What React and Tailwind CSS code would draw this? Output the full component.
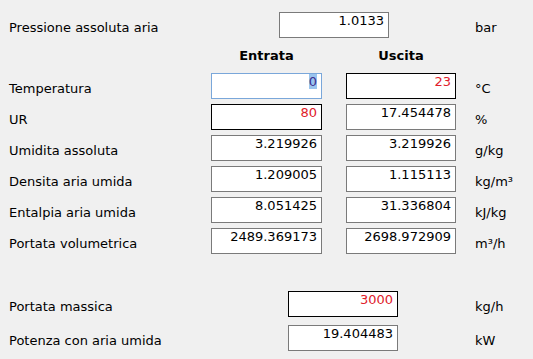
export default function App() {

    const rows = [
        { label: "Temperatura", a: "0", b: "23", unit: "°C", aSel: true, bEdit: true },
        { label: "UR", a: "80", b: "17.454478", unit: "%", aEdit: true },
        { label: "Umidita assoluta", a: "3.219926", b: "3.219926", unit: "g/kg" },
        { label: "Densita aria umida", a: "1.209005", b: "1.115113", unit: "kg/m³" },
        { label: "Entalpia aria umida", a: "8.051425", b: "31.336804", unit: "kJ/kg" },
        { label: "Portata volumetrica", a: "2489.369173", b: "2698.972909", unit: "m³/h" },
    ]

    // editable boxes have a black border and red text
    const box = (value, edit, sel, width) => (
        <div className={`${width} h-[26px] bg-white border text-right pr-[4px] ${
            sel ? 'border-[#7aa7da]' : edit ? 'border-black text-[#e0202a]' : 'border-[#7a7a7a] text-black'
        }`}>
            {sel ? <span className="bg-[#9ac4ee] text-[#3d2f8f]">{value}</span> : value}
        </div>
    )

    return (
        <div className="w-[533px] h-[359px] bg-[#f0f0f0] text-[13px] leading-[15px] text-black pl-[9px] pt-[12px]" style={{ fontFamily: "'DejaVu Sans', Verdana, sans-serif" }}>
            <div className="flex items-start h-[26px]">
                <div className="w-[270px] pt-[8px]">Pressione assoluta aria</div>
                {box("1.0133", false, false, "w-[110px]")}
                <div className="ml-[86px] pt-[8px]">bar</div>
            </div>

            <div className="flex items-start mt-[10px] font-bold">
                <div className="w-[202px]" />
                <div className="w-[111px] text-center">Entrata</div>
                <div className="w-[24px]" />
                <div className="w-[110px] text-center">Uscita</div>
            </div>

            <div className="flex flex-col gap-[5px] mt-[10px]">
                {rows.map(r => (
                    <div key={r.label} className="flex items-start h-[26px]">
                        <div className="w-[202px] pt-[8px]">{r.label}</div>
                        {box(r.a, r.aEdit, r.aSel, "w-[111px]")}
                        <div className="w-[24px]" />
                        {box(r.b, r.bEdit, false, "w-[110px]")}
                        <div className="ml-[19px] pt-[8px]">{r.unit}</div>
                    </div>
                ))}
            </div>

            <div className="flex flex-col gap-[8px] mt-[37px]">
                <div className="flex items-start h-[26px]">
                    <div className="w-[279px] pt-[8px]">Portata massica</div>
                    {box("3000", true, false, "w-[110px]")}
                    <div className="ml-[77px] pt-[8px]">kg/h</div>
                </div>
                <div className="flex items-start h-[26px]">
                    <div className="w-[279px] pt-[8px]">Potenza con aria umida</div>
                    {box("19.404483", false, false, "w-[110px]")}
                    <div className="ml-[77px] pt-[8px]">kW</div>
                </div>
            </div>
        </div>
    )
}
